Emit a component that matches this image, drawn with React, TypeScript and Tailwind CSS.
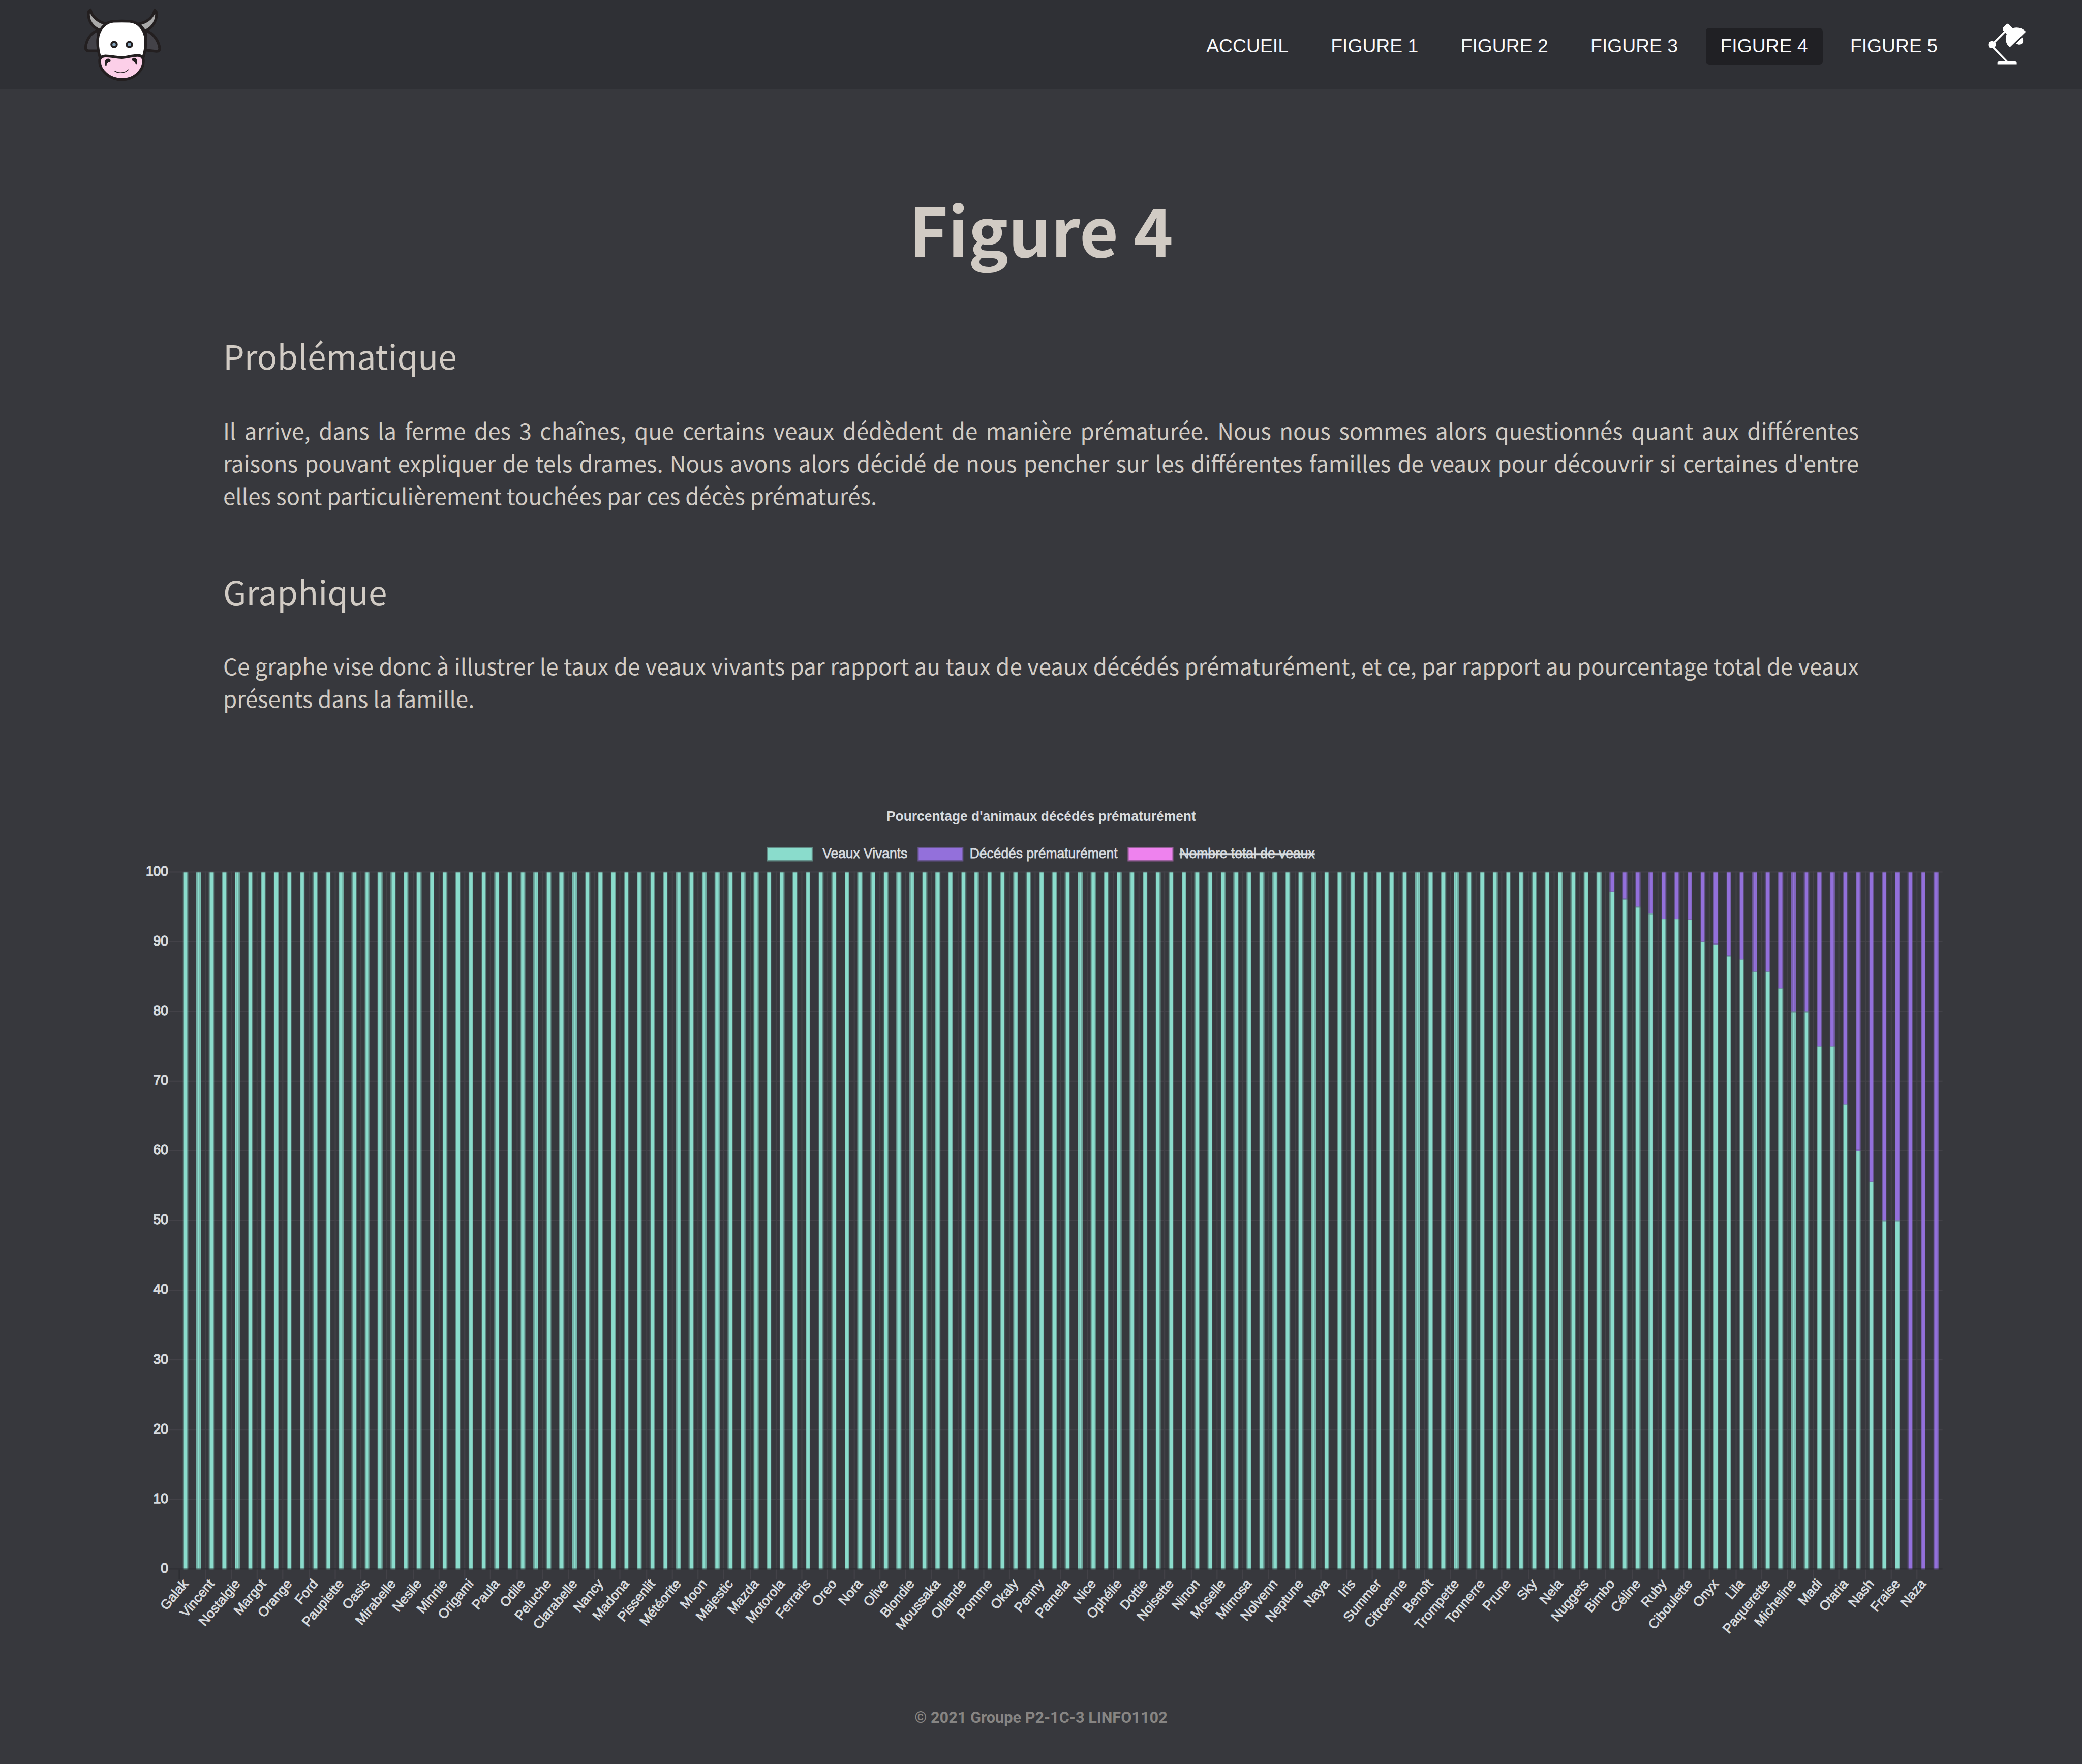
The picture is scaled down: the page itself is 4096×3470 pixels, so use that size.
import React from "react";

const NAMES = [
  "Galak", "Vincent", "Nostalgie", "Margot", "Orange", "Ford", "Paupiette", "Oasis", "Mirabelle", "Nesile",
  "Minnie", "Origami", "Paula", "Odile", "Peluche", "Clarabelle", "Nancy", "Madona", "Pissenlit", "Météorite",
  "Moon", "Majestic", "Mazda", "Motorola", "Ferraris", "Oreo", "Nora", "Olive", "Blondie", "Moussaka",
  "Ollande", "Pomme", "Okaly", "Penny", "Pamela", "Nice", "Ophélie", "Dottie", "Noisette", "Ninon",
  "Moselle", "Mimosa", "Nolvenn", "Neptune", "Naya", "Iris", "Summer", "Citroenne", "Benoît", "Trompette",
  "Tonnerre", "Prune", "Sky", "Nela", "Nuggets", "Bimbo", "Céline", "Ruby", "Ciboulette", "Onyx",
  "Lila", "Paquerette", "Micheline", "Madi", "Otaria", "Nash", "Fraise", "Naza",
];

const PARTIAL = [
  97.2, 96.15, 95, 94.1, 93.3, 93.3, 93.2, 90, 89.65, 88, 87.5, 85.71, 85.71, 83.33, 80, 80, 75, 75,
  66.67, 60, 55.56, 50, 50, 0, 0, 0,
];
const ALIVE = [...Array(110).fill(100), ...PARTIAL] as number[];

const PX = 2.7778;
const LEFT = 445.3;
const PITCH = 32.27;
const ZERO = 3904.6;
const UNIT = 17.34;
const ORIGIN_X = 455;
const ORIGIN_Y = 3906 - PX * 1000;
const GREEN = "#8adccc";
const PURPLE = "#9370db";

const yOf = (v: number) => ZERO - v * UNIT;

/** Splits a span into device cells: partial edge, full body, partial edge. */
function cells(a: number, b: number, origin: number) {
  const p = (a - origin) / PX;
  const q = (b - origin) / PX;
  const out: { s: number; e: number; o: number }[] = [];
  const pc = Math.ceil(p);
  const qf = Math.floor(q);
  if (pc - p > 0.02) out.push({ s: pc - 1, e: pc, o: pc - p });
  if (qf > pc) out.push({ s: pc, e: qf, o: 1 });
  if (q - qf > 0.02) out.push({ s: qf, e: qf + 1, o: q - qf });
  return out.map((c) => ({ s: origin + c.s * PX, e: origin + c.e * PX, o: c.o }));
}

function Bar({ cx, top, bottom, fill }: { cx: number; top: number; bottom: number; fill: string }) {
  const xs = cells(cx - 5.2, cx + 5.2, ORIGIN_X);
  const ys = cells(top, bottom, ORIGIN_Y);
  return (
    <g fill={fill}>
      {xs.map((x, i) =>
        ys.map((y, j) => (
          <rect key={`${i}-${j}`} x={x.s} y={y.s} width={x.e - x.s} height={y.e - y.s} opacity={x.o * y.o} />
        )),
      )}
    </g>
  );
}

function LegendBox({ x, fill }: { x: number; fill: string }) {
  return (
    <g fill={fill}>
      <rect x={x} y={2108} width={114} height={36} opacity={0.5} />
      <rect x={x + 2.8} y={2111} width={108.6} height={30} />
    </g>
  );
}

function Chart() {
  const ticks = [0, 10, 20, 30, 40, 50, 60, 70, 80, 90, 100];
  return (
    <svg
      viewBox="0 1960 5181 2140"
      className="mt-[144.5px] block h-[1691.8px] w-[4096px] shrink-0 fill-[#d6dade] font-['Liberation_Sans',Arial,sans-serif] text-[33.33px]"
    >
      <text x={2206} y={2044} fontWeight={700} fontSize={35} textLength={770} lengthAdjust="spacingAndGlyphs">
        Pourcentage d'animaux décédés prématurément
      </text>
      <LegendBox x={1908.4} fill={GREEN} />
      <LegendBox x={2283.4} fill={PURPLE} />
      <LegendBox x={2806} fill="#ee82ee" />
      <g stroke="#d6dade" strokeWidth={1} fontSize={35}>
        <text x={2047} y={2136} textLength={211} lengthAdjust="spacingAndGlyphs">Veaux Vivants</text>
        <text x={2413} y={2136} textLength={368} lengthAdjust="spacingAndGlyphs">Décédés prématurément</text>
        <text x={2935} y={2136} textLength={337} lengthAdjust="spacingAndGlyphs">Nombre total de veaux</text>
      </g>
      <rect x={2935} y={2123.5} width={337} height={5} />

      {ticks.slice(1).map((t) => (
        <rect key={t} x={421} y={yOf(t) - 1.4} width={4413} height={2.78} fill="#434248" />
      ))}
      {NAMES.map((n, i) => (
        <rect
          key={n}
          x={i === 0 ? 444.6 : ORIGIN_X + Math.round((LEFT + 2 * i * PITCH - ORIGIN_X) / PX) * PX}
          y={i === 0 ? 3906 : 2169}
          width={2.78}
          height={i === 0 ? 25 : 1762}
          fill={i === 0 ? "#2b2c31" : "#434248"}
        />
      ))}
      <rect x={421} y={3903.2} width={4413} height={2.8} fill="#2f3035" />
      {ALIVE.map((v, i) => {
        const cx = LEFT + (i + 0.5) * PITCH + 0.3;
        return (
          <g key={i}>
            {v > 0 && <Bar cx={cx} top={yOf(v)} bottom={ZERO} fill={GREEN} />}
            {v < 100 && <Bar cx={cx} top={yOf(100)} bottom={yOf(v)} fill={PURPLE} />}
          </g>
        );
      })}
      <g stroke="#d6dade" strokeWidth={1.8} fontSize={35} textAnchor="end">
        {ticks.map((t) => (
          <text key={t} x={418.5} y={yOf(t) + 9.5} textLength={String(t).length * 18.54} lengthAdjust="spacingAndGlyphs">
            {t}
          </text>
        ))}
      </g>
      <g stroke="#d6dade" strokeWidth={1.2} textAnchor="end">
        {NAMES.map((n, i) => (
          <text key={n} transform={`translate(${LEFT + (2 * i + 0.5) * PITCH} 3935) rotate(-50)`} y={11.2}>{n}</text>
        ))}
      </g>
    </svg>
  );
}

function Cow() {
  return (
    <svg viewBox="0 0 780 665" className="h-[175.2px] w-[205.5px]" strokeLinejoin="round" strokeLinecap="round">
      <g stroke="#231f20" strokeWidth={20}>
        <path d="M196 226C140 240 104 300 100 356C100 374 110 380 124 380H192Z" fill="#434248" />
        <path d="M552 228C612 252 646 310 653 360C654 378 645 384 630 384L546 374Z" fill="#434248" />
        <path d="M136 74C146 120 190 166 256 178L212 228C150 206 112 150 124 86Z" fill="#a9a9a9" />
        <path d="M616 76C606 124 566 166 500 178L542 232C600 212 640 146 627 88Z" fill="#a9a9a9" />
        <path d="M208 430C196 390 188 340 190 296C194 220 250 162 310 159C350 157 390 157 430 159C492 164 546 220 548 296C550 340 544 390 530 430Z" fill="#fff" />
        <path d="M205 452C206 430 222 420 248 418C300 420 330 430 369 430C410 430 440 416 486 414C514 412 530 426 532 452C534 530 460 595 372 595C282 595 202 530 205 452Z" fill="#fccfe8" />
      </g>
      <path d="M125 92L136 66L150 98Z M604 98L616 68L629 98Z" fill="#231f20" stroke="#231f20" strokeWidth={6} />
      <g fill="#83a3bb" stroke="#231f20" strokeWidth={15}>
        <circle cx={313} cy={333} r={20} />
        <circle cx={427} cy={333} r={20} />
      </g>
      <path d="M247 488C240 458 248 438 270 438C284 440 292 450 284 458C266 462 256 472 257 488Q252 492 247 488Z" fill="#231f20" />
      <path d="M484 478C490 450 480 432 460 432C448 434 443 446 450 454C464 456 472 466 474 477Q479 481 484 478Z" fill="#231f20" />
      <path d="M319 532C348 550 392 548 419 521" fill="none" stroke="#231f20" strokeWidth={6} />
    </svg>
  );
}

function Lamp() {
  return (
    <svg viewBox="0 0 720 480" className="mt-[23.7px] ml-[17px] h-[126.5px] w-[189.7px] self-start" fill="#fff">
      <path d="M328 145L244 229L236 258L346 372" fill="none" stroke="#fff" strokeWidth={14} />
      <path d="M339 90Q348 83 357 90L387 120C422 108 458 118 484 146L365 262C334 238 326 200 341 164L314 136Q307 126 314 116Z" />
      <path d="M456 188C478 224 450 258 412 234Z" />
      <path d="M222 215Q238 212 256 229Q268 243 256 256Q238 273 220 269Q207 260 207 242Q208 222 222 215Z" />
      <path d="M272 389V376Q272 364 284 364H404Q416 364 416 376V389Z" />
    </svg>
  );
}

const LINKS = ["ACCUEIL", "FIGURE 1", "FIGURE 2", "FIGURE 3", "FIGURE 4", "FIGURE 5"];

export default function App() {
  return (
    <div className="flex h-[3470px] w-[4096px] flex-col overflow-hidden bg-[#37383d] font-['Noto_Sans_CJK_JP',sans-serif] text-[#d1cbc4]">
      <header className="flex h-[175px] shrink-0 items-center bg-[#2f3035] pr-[48.4px] pl-[142.3px]">
        <Cow />
        <nav className="mt-[7px] ml-auto flex gap-[25.4px] font-['Liberation_Sans',Arial,sans-serif] text-[37.3px] text-[#f8f9fa]">
          {LINKS.map((l) => (
            <a
              key={l}
              className={
                l === "FIGURE 4"
                  ? "flex h-[72px] items-center rounded-[7px] bg-[#202024] px-[29px] whitespace-nowrap"
                  : "flex h-[72px] items-center px-[29px] whitespace-nowrap"
              }
            >
              {l}
            </a>
          ))}
        </nav>
        <Lamp />
      </header>
      <main className="flex flex-col">
        <h1 className="mt-[193.5px] text-center text-[131.8px] leading-[160px] font-bold">Figure 4</h1>
        <div className="mx-auto w-[3218px]">
          <h2 className="mt-[122.7px] text-[65.9px] leading-[96px]">Problématique</h2>
          <p className="mt-[66.4px] text-justify text-[43.9px] leading-[64px]">
            Il arrive, dans la ferme des 3 chaînes, que certains veaux dédèdent de manière prématurée. Nous nous sommes
            alors questionnés quant aux différentes raisons pouvant expliquer de tels drames. Nous avons alors décidé de
            nous pencher sur les différentes familles de veaux pour découvrir si certaines d'entre elles sont
            particulièrement touchées par ces décès prématurés.
          </p>
          <h2 className="mt-[109.4px] text-[65.9px] leading-[96px]">Graphique</h2>
          <p className="mt-[66px] text-justify text-[43.9px] leading-[64px]">
            Ce graphe vise donc à illustrer le taux de veaux vivants par rapport au taux de veaux décédés prématurément,
            et ce, par rapport au pourcentage total de veaux présents dans la famille.
          </p>
        </div>
        <Chart />
      </main>
      <footer className="mt-[115.5px] text-center font-['Roboto',sans-serif] text-[30.7px] leading-[44px] font-bold text-[#878583]">
        © 2021 Groupe P2-1C-3 LINFO1102
      </footer>
    </div>
  );
}
